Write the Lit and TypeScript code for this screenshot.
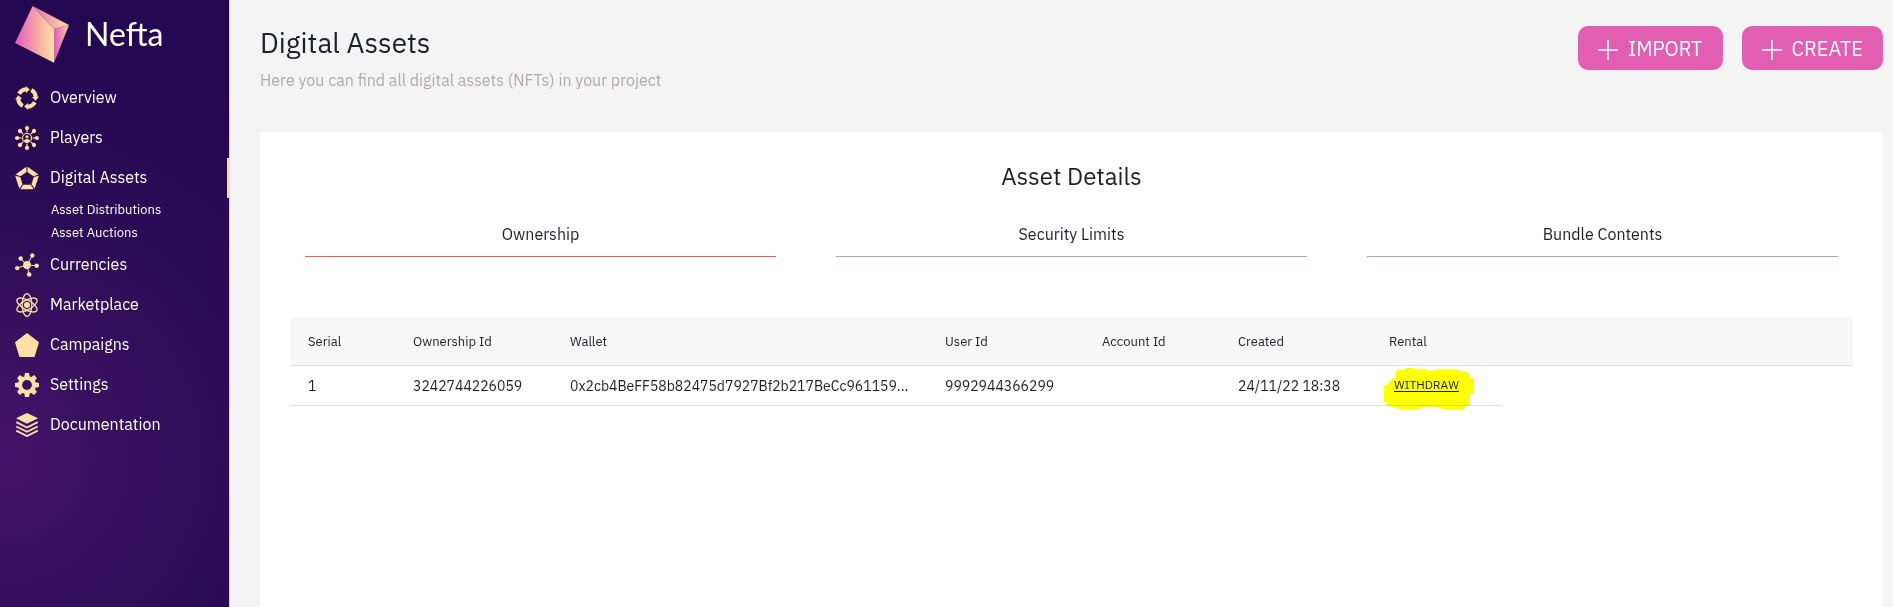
import { LitElement, html, css, svg, nothing } from "lit";
import { customElement, state } from "lit/decorators.js";
import { classMap } from "lit/directives/class-map.js";

const quarter = [0, 90, 180, 270];
const eighth = [0, 45, 90, 135, 180, 225, 270, 315];
const fifth = [0, 72, 144, 216, 288];

const icons = {
  overview: svg`${quarter.map(
    (a) => svg`<g transform="rotate(${a} 12 12)">
      <path d="M4.100 7.700A9 9 0 0 1 11 3.200" fill="none" stroke="currentColor" stroke-width="4"/>
      <path d="M10.800 0l4 3.500-3.800 3.500z"/>
    </g>`
  )}`,
  players: svg`${eighth.map(
    (a) => svg`<g transform="rotate(${a} 12 12)">
      <circle cx="12" cy="2.1" r="2.1"/>
      <path d="M12 3v3.4" stroke="currentColor" stroke-width="1.2"/>
    </g>`
  )}
    <circle cx="12" cy="12" r="4.5" fill="none" stroke="currentColor" stroke-width="1.2"/>
    <circle cx="12" cy="10.8" r="1.5"/>
    <path d="M9 15.2c.3-3 5.700-3 6 0-1.800 1.600-4.200 1.600-6 0z"/>`,
  assets: svg`${fifth.map(
    (a) => svg`<path transform="rotate(${a} 12 12.900)" d="M5.300 23.200h13.400l-2.900-4.400H8.200z"/>`
  )}`,
  currencies: svg`<path d="M12 12L17.300 2.700M12 12L5.700 5.700M12 12L2.100 15M12 12l2 9.300M12 12l9.700.7" stroke="currentColor" stroke-width="1"/>
    <circle cx="12" cy="12" r="3.900"/><circle cx="17.300" cy="2.500" r="2.200"/><circle cx="5.700" cy="5.500" r="2.200"/>
    <circle cx="2.200" cy="15.100" r="2.200"/><circle cx="14.200" cy="21.500" r="2.300"/><circle cx="21.700" cy="12.700" r="2.200"/>`,
  marketplace: svg`${[0, 60, 120].map(
    (a) => svg`<ellipse transform="rotate(${a} 12 12)" cx="12" cy="12" rx="4.800" ry="11.300" fill="none" stroke="currentColor" stroke-width="1.300"/>`
  )}<circle cx="12" cy="12" r="3"/>`,
  campaigns: svg`<path d="M12 0l12 9.200L19.500 24h-15L0 9.200z"/>`,
  settings: svg`${eighth.map(
    (a) => svg`<path transform="rotate(${a} 12 12)" d="M10 0h4l1 5H9z"/>`
  )}<circle cx="12" cy="12" r="6.900" fill="none" stroke="currentColor" stroke-width="4"/>`,
  documentation: svg`<path d="M12 0l11 5.300-11 5.500L1 5.300z"/>
    <path d="M1.300 9.200L12 14.500l10.700-5.300M1.300 13.500L12 18.800l10.700-5.300M1.300 17.700L12 23l10.700-5.300" fill="none" stroke="currentColor" stroke-width="1.900"/>`,
};

interface NavEntry {
  label: string;
  icon: keyof typeof icons;
  children?: string[];
}

const nav: NavEntry[] = [
  { label: "Overview", icon: "overview" },
  { label: "Players", icon: "players" },
  { label: "Digital Assets", icon: "assets", children: ["Asset Distributions", "Asset Auctions"] },
  { label: "Currencies", icon: "currencies" },
  { label: "Marketplace", icon: "marketplace" },
  { label: "Campaigns", icon: "campaigns" },
  { label: "Settings", icon: "settings" },
  { label: "Documentation", icon: "documentation" },
];

@customElement("nefta-sidebar")
class NeftaSidebar extends LitElement {
  static styles = css`
    :host {
      display: block;
      box-sizing: border-box;
      width: 230px;
      flex: none;
      border-right: 1px solid #d9cfe6;
      color: #fff;
      background: radial-gradient(circle at 0 75%, #431469, #2d0c57 46%, #240851 85%);
    }
    .brand {
      display: flex;
      align-items: center;
      gap: 16px;
      height: 72px;
      padding: 0 15px 4px;
      box-sizing: border-box;
      margin-bottom: 6px;
      color: inherit;
      text-decoration: none;
      font: 400 32px/40px Lato, sans-serif;
    }
    .mark {
      width: 54px;
      height: 57px;
    }
    ul {
      list-style: none;
      margin: 0;
      padding: 0;
    }
    a {
      color: inherit;
      text-decoration: none;
    }
    .item {
      position: relative;
      display: flex;
      align-items: center;
      gap: 11px;
      height: 40px;
      padding-left: 15px;
      font-size: 16px;
    }
    .item.active::after {
      content: "";
      position: absolute;
      top: 0;
      bottom: 0;
      right: -1px;
      width: 3px;
      background: #ffd9a0;
    }
    .label {
      padding-bottom: 2px;
    }
    .icon {
      width: 24px;
      height: 24px;
      fill: currentColor;
      color: #ffe0a3;
    }
    .sub {
      padding: 0 0 1px 51px;
      font-size: 13px;
      line-height: 23px;
    }
  `;

  render() {
    return html`
      <a class="brand" href="#">
        <svg class="mark" viewBox="0 0 162 171" aria-hidden="true">
          <defs>
            <linearGradient id="front"><stop offset="0" stop-color="#e25bb4" /><stop offset="1" stop-color="#ffe3a0" /></linearGradient>
            <linearGradient id="top"><stop offset="0" stop-color="#e66fb2" /><stop offset="1" stop-color="#ffdfa3" /></linearGradient>
            <linearGradient id="side"><stop offset="0" stop-color="#e05cb3" /><stop offset="1" stop-color="#f9c9a5" /></linearGradient>
          </defs>
          <path d="M53 0L117 69V170L0 111z" fill="url(#front)" />
          <path d="M53 0L162 57 117 69z" fill="url(#top)" />
          <path d="M117 69L162 57 117 170z" fill="url(#side)" />
        </svg>
        <span>Nefta</span>
      </a>
      <nav>
        <ul>
          ${nav.map(
            (n) => html`<li>
              <a class=${classMap({ item: true, active: !!n.children })} href="#">
                <svg class="icon" viewBox="0 0 24 24" aria-hidden="true">${icons[n.icon]}</svg>
                <span class="label">${n.label}</span>
              </a>
              ${n.children
                ? html`<ul class="sub">${n.children.map((c) => html`<li><a href="#">${c}</a></li>`)}</ul>`
                : nothing}
            </li>`
          )}
        </ul>
      </nav>
    `;
  }
}

const rows = [
  {
    serial: "1",
    ownership: "3242744226059",
    wallet: "0x2cb4BeFF58b82475d7927Bf2b217BeCc961159...",
    user: "9992944366299",
    account: "",
    created: "24/11/22 18:38",
  },
];

@customElement("ownership-table")
class OwnershipTable extends LitElement {
  static styles = css`
    :host {
      display: block;
    }
    table {
      width: 100%;
      table-layout: fixed;
      border-collapse: separate;
      border-spacing: 0;
      text-align: left;
    }
    th,
    td {
      box-sizing: border-box;
      padding: 0 0 0 18px;
      border-bottom: 1px solid #e0e0e6;
      white-space: nowrap;
    }
    th {
      height: 49px;
      background: #f7f7f7;
      font-size: 13px;
      font-weight: 400;
    }
    td {
      height: 40px;
      font-size: 14px;
    }
    td.rest {
      border-bottom: 0;
    }
    .serial { width: 105px; }
    .id { width: 157px; }
    .wallet { width: 375px; }
    .account { width: 136px; }
    .created { width: 151px; }
    .rental { width: 131px; }
    .action {
      position: relative;
      padding: 0 0 2px 23px;
      font-size: 12px;
    }
    .action a {
      color: inherit;
      text-underline-offset: 2px;
    }
    .marker {
      position: absolute;
      left: 13px;
      top: 2px;
      width: 90px;
      height: 42px;
      fill: #ff0;
      mix-blend-mode: multiply;
      pointer-events: none;
    }
  `;

  render() {
    return html`<table>
      <thead>
        <tr>
          <th class="serial">Serial</th>
          <th class="id">Ownership Id</th>
          <th class="wallet">Wallet</th>
          <th class="id">User Id</th>
          <th class="account">Account Id</th>
          <th class="created">Created</th>
          <th class="rental">Rental</th>
          <th></th>
        </tr>
      </thead>
      <tbody>
        ${rows.map(
          (r) => html`<tr>
            <td>${r.serial}</td>
            <td>${r.ownership}</td>
            <td>${r.wallet}</td>
            <td>${r.user}</td>
            <td>${r.account}</td>
            <td>${r.created}</td>
            <td class="action">
              <a href="#">WITHDRAW</a>
              <svg class="marker" viewBox="0 0 270 126" aria-hidden="true">
                <path d="M0 54L12 48 20 36 33 28 34 14 42 6 66 4 68 0H88L92 4H120L138 9 165 4H200L222 6 228 10H240L252 14 257 22V30H270V78H258V112L244 114 238 125H180L165 119 135 116 110 119 105 125H48L40 120 25 118 8 110V102H0z" />
              </svg>
            </td>
            <td class="rest"></td>
          </tr>`
        )}
      </tbody>
    </table>`;
  }
}

const tabs = ["Ownership", "Security Limits", "Bundle Contents"];

@customElement("app-root")
class AppRoot extends LitElement {
  static styles = css`
    :host {
      display: flex;
      min-height: 100vh;
      background: #f4f4f4;
      color: #1d2029;
      font-family: "IBM Plex Sans", Roboto, sans-serif;
    }
    main {
      flex: 1;
      min-width: 0;
      display: flex;
      flex-direction: column;
      gap: 40px;
      padding: 26px 10px 0 30px;
    }
    header {
      display: flex;
      justify-content: space-between;
      align-items: flex-start;
      gap: 20px;
    }
    h1,
    h2,
    p {
      margin: 0;
    }
    h1 {
      font-size: 28px;
      font-weight: 400;
      line-height: 34px;
    }
    p {
      margin-top: 8px;
      font-size: 16px;
      line-height: 24px;
      color: #b3a9ac;
    }
    .actions {
      display: flex;
      gap: 19px;
    }
    .action {
      display: flex;
      align-items: center;
      gap: 10px;
      height: 44px;
      padding: 0 20px;
      border: 0;
      border-radius: 10px;
      background: #e15eb2;
      color: #fff;
      font-family: inherit;
      font-size: 20px;
    }
    .plus {
      width: 20px;
      height: 20px;
      stroke: currentColor;
      stroke-width: 1.5;
      margin-top: 4px;
    }
    .card {
      flex: 1;
      padding: 28px 30px 30px;
      border-radius: 4px 4px 0 0;
      background: #fff;
    }
    h2 {
      font-size: 24px;
      font-weight: 400;
      line-height: 32px;
      text-align: center;
    }
    .tabs {
      display: grid;
      grid-template-columns: repeat(3, 1fr);
      gap: 60px;
      margin: 30px 15px 60px;
    }
    .tab {
      padding: 0 0 10px;
      border: 0;
      border-bottom: 1px solid #b3a3aa;
      background: none;
      color: inherit;
      font: 400 16px/24px "IBM Plex Sans", Roboto, sans-serif;
    }
    .tab.selected {
      border-color: #ff5a4c;
    }
  `;

  @state() private selected = 0;

  private action(label: string) {
    return html`<button class="action" type="button">
      <svg class="plus" viewBox="0 0 20 20" aria-hidden="true"><path d="M10 0v20M0 10h20" /></svg>${label}
    </button>`;
  }

  render() {
    return html`
      <nefta-sidebar></nefta-sidebar>
      <main>
        <header>
          <div>
            <h1>Digital Assets</h1>
            <p>Here you can find all digital assets (NFTs) in your project</p>
          </div>
          <div class="actions">${this.action("IMPORT")}${this.action("CREATE")}</div>
        </header>
        <section class="card">
          <h2>Asset Details</h2>
          <div class="tabs" role="tablist">
            ${tabs.map(
              (t, i) => html`<button
                class=${classMap({ tab: true, selected: i === this.selected })}
                type="button"
                role="tab"
                aria-selected=${i === this.selected}
                @click=${() => (this.selected = i)}
              >${t}</button>`
            )}
          </div>
          <ownership-table></ownership-table>
        </section>
      </main>
    `;
  }
}
